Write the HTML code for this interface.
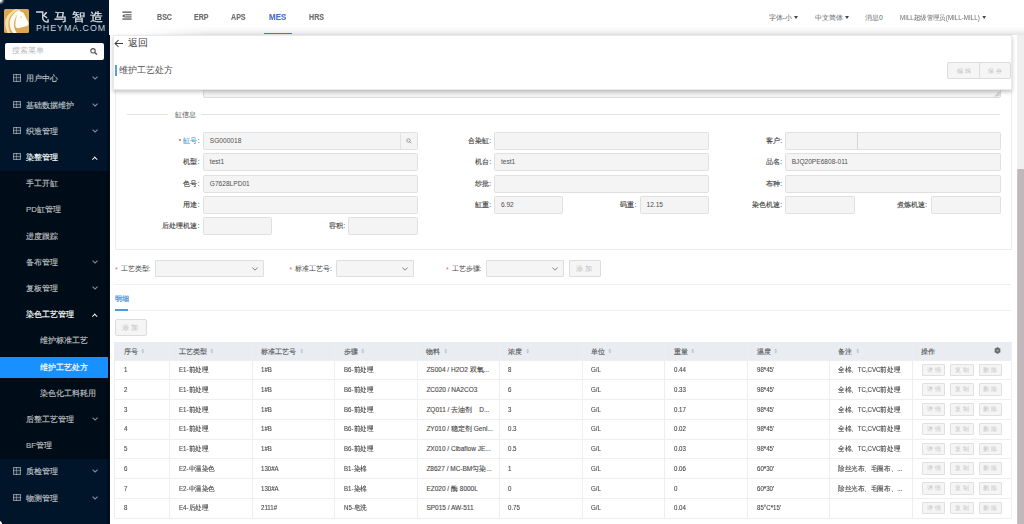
<!DOCTYPE html>
<html><head><meta charset="utf-8">
<style>
*{box-sizing:border-box;margin:0;padding:0}
html,body{width:1024px;height:524px;overflow:hidden;background:#f0f2f5;font-family:"Liberation Sans",sans-serif;color:#595959}
.a{position:absolute}
.t{position:absolute;white-space:nowrap;line-height:1}
/* sidebar */
#side{position:absolute;left:0;top:0;width:109.5px;height:524px;background:#001529}
.mi{position:absolute;left:0;width:109.5px;height:21px;color:rgba(255,255,255,.65);font-size:7.8px}
.mi .lb{position:absolute;left:26px;top:6px;line-height:9px;white-space:nowrap;-webkit-text-stroke:.18px currentColor}
.mi .ic{position:absolute;left:13.3px;top:6px;width:7.4px;height:7.4px;border:1px solid rgba(255,255,255,.45);background:linear-gradient(90deg,transparent 2.2px,rgba(255,255,255,.3) 2.2px,rgba(255,255,255,.3) 3.1px,transparent 3.1px),linear-gradient(transparent 2.2px,rgba(255,255,255,.3) 2.2px,rgba(255,255,255,.3) 3.1px,transparent 3.1px),rgba(255,255,255,.1)}
.mi .ar{position:absolute;left:92.8px;top:7.1px;width:4.2px;height:4.2px;border-right:1.1px solid rgba(255,255,255,.55);border-bottom:1.1px solid rgba(255,255,255,.55);transform:rotate(45deg)}
.mi .ar.up{left:93.3px;top:10.7px;width:3.5px;height:3.5px;border-right-width:1.3px;border-bottom-width:1.3px;transform:rotate(-135deg);border-color:#fff}
/* header */
#hdr{position:absolute;left:109px;top:0;width:915px;height:34.5px;background:#fff}
.nav{position:absolute;top:12.3px;font-size:8.9px;font-weight:bold;color:#6c6c6c;line-height:10px;transform:scaleX(.8);transform-origin:0 0;-webkit-text-stroke:.15px #6c6c6c}
.hr{position:absolute;top:13.8px;font-size:6.8px;color:#666;line-height:8px;white-space:nowrap}
.tri{display:inline-block;width:0;height:0;border-left:2.6px solid transparent;border-right:2.6px solid transparent;border-top:3.4px solid #444;vertical-align:1px;margin-left:.6px}
/* content */
.inp{position:absolute;height:18px;background:#f4f4f4;border:1px solid #e0e0e0;border-radius:1.5px;font-size:6.6px;color:#505050;line-height:16px;padding-left:5.5px;white-space:nowrap}
.lab{position:absolute;font-size:6.6px;color:#444;line-height:8px;text-align:right;white-space:nowrap;-webkit-text-stroke:.15px #444}
.lab i{font-style:normal;margin-left:.6px}
</style></head><body><div id="wrap" style="position:absolute;left:0;top:0;width:1024px;height:524px;overflow:hidden">

<!-- SIDEBAR -->
<div id="side">
<div class="a" style="left:4.3px;top:8.6px;width:24.9px;height:24.6px;background:#dca653;border-radius:1.5px;overflow:hidden">
<svg width="24.9" height="24.6" viewBox="0 0 25 25"><path d="M12.6 0C6 2.5 1 8 1 14C1 19 2.5 22 4 25L6.8 25C5 21.5 4.3 18 4.4 14C4.6 8.5 8.5 3.5 14.5 0.8Z" fill="#f4dfb2"/><path d="M15.5 0.8C9.5 3.5 5.6 9 5.6 14.5C5.6 19 7.4 22.5 9.6 25L13.2 25C11.2 22 9.8 19 10 15C10.3 10 12.5 6 16.8 2.8Z" fill="#fffaf0"/><path d="M14 4.2C16.5 2 19 2.6 20.2 4.8L24.6 13.8C25.2 15.6 24.2 17.4 22.4 17.6L15.2 19.4C12.6 20 10.9 18.2 11.3 15.2C11.8 10.5 12.3 6.2 14 4.2Z" fill="#fffdf9"/><circle cx="17.3" cy="8.2" r="0.9" fill="#d8d2a8"/><path d="M11.3 15.5C11 12 11.5 9 13 6.5" stroke="#e6cf98" stroke-width=".6" fill="none"/></svg>
</div>
<div class="t" style="left:35.6px;top:10.6px;font-size:12px;color:#e4e8ee;line-height:12px;letter-spacing:4.3px;transform:scaleX(1.1);transform-origin:0 0;-webkit-text-stroke:.2px #e4e8ee">飞马智造</div>
<div class="t" style="left:36px;top:24.4px;font-size:8.9px;color:#cdd2da;line-height:8px;letter-spacing:.95px">PHEYMA.COM</div>
<div class="a" style="left:5.3px;top:42.8px;width:98.6px;height:17px;background:#fff;border-radius:2px"></div>
<div class="t" style="left:12.4px;top:47px;font-size:7.9px;color:#bdbdbd;line-height:8px">搜索菜单</div>
<svg class="a" style="left:89.6px;top:48.2px" width="8" height="7" viewBox="0 0 8 7"><circle cx="3" cy="2.8" r="2.2" fill="none" stroke="#555" stroke-width="1.1"/><path d="M4.6 4.4L7 6.6" stroke="#555" stroke-width="1.3"/></svg>
<div class="a" style="left:0;top:170.5px;width:109px;height:288px;background:#000c17"></div>
<div class="a" style="left:106px;top:34px;width:3px;height:490px;background:linear-gradient(90deg,rgba(0,0,0,.1),rgba(0,0,0,.38))"></div>
<div class="a" style="left:0;top:356.8px;width:108.2px;height:21.4px;background:#1890ff"></div>
<div class="mi" style="top:68.3px;color:rgba(255,255,255,.65)"><i class="ic"></i><span class="lb" style="left:26px">用户中心</span><i class="ar"></i></div>
<div class="mi" style="top:94.5px;color:rgba(255,255,255,.65)"><i class="ic"></i><span class="lb" style="left:26px">基础数据维护</span><i class="ar"></i></div>
<div class="mi" style="top:120.7px;color:rgba(255,255,255,.65)"><i class="ic"></i><span class="lb" style="left:26px">织造管理</span><i class="ar"></i></div>
<div class="mi" style="top:146.9px;color:#fff"><i class="ic"></i><span class="lb" style="left:26px">染整管理</span><i class="ar up"></i></div>
<div class="mi" style="top:173.1px;color:rgba(255,255,255,.65)"><span class="lb" style="left:26px">手工开缸</span></div>
<div class="mi" style="top:199.3px;color:rgba(255,255,255,.65)"><span class="lb" style="left:26px">PD缸管理</span></div>
<div class="mi" style="top:225.5px;color:rgba(255,255,255,.65)"><span class="lb" style="left:26px">进度跟踪</span></div>
<div class="mi" style="top:251.7px;color:rgba(255,255,255,.65)"><span class="lb" style="left:26px">备布管理</span><i class="ar"></i></div>
<div class="mi" style="top:277.9px;color:rgba(255,255,255,.65)"><span class="lb" style="left:26px">复板管理</span><i class="ar"></i></div>
<div class="mi" style="top:304.1px;color:#fff"><span class="lb" style="left:26px">染色工艺管理</span><i class="ar up"></i></div>
<div class="mi" style="top:330.3px;color:rgba(255,255,255,.65)"><span class="lb" style="left:40px">维护标准工艺</span></div>
<div class="mi" style="top:356.5px;color:#fff"><span class="lb" style="left:40px">维护工艺处方</span></div>
<div class="mi" style="top:382.7px;color:rgba(255,255,255,.65)"><span class="lb" style="left:40px">染色化工料耗用</span></div>
<div class="mi" style="top:408.9px;color:rgba(255,255,255,.65)"><span class="lb" style="left:26px">后整工艺管理</span><i class="ar"></i></div>
<div class="mi" style="top:435.1px;color:rgba(255,255,255,.65)"><span class="lb" style="left:26px">BF管理</span></div>
<div class="mi" style="top:461.3px;color:rgba(255,255,255,.65)"><i class="ic"></i><span class="lb" style="left:26px">质检管理</span><i class="ar"></i></div>
<div class="mi" style="top:487.5px;color:rgba(255,255,255,.65)"><i class="ic"></i><span class="lb" style="left:26px">物测管理</span><i class="ar"></i></div>
</div>

<!-- HEADER -->
<div id="hdr">
<svg class="a" style="left:12.9px;top:11.4px" width="10" height="10" viewBox="0 0 10 10"><g fill="#4a4a4a"><rect x="0.4" y="0.55" width="9.2" height="1.2"/><rect x="3.2" y="3.3" width="6.4" height="1.05"/><rect x="3.2" y="5.4" width="6.4" height="1.05"/><rect x="0.4" y="7.45" width="9.2" height="1.2"/><path d="M0.2 4.9L2.6 3.1V6.7Z"/></g></svg>
<div class="a" style="left:4px;top:26px;width:911px;height:8.5px;background:linear-gradient(rgba(0,0,0,0),rgba(0,0,0,.035) 50%,rgba(0,0,0,.105));-webkit-mask-image:linear-gradient(90deg,transparent 0,transparent 25px,#000 100px)"></div>
<div class="nav" style="left:47.5px">BSC</div>
<div class="nav" style="left:85px">ERP</div>
<div class="nav" style="left:122px">APS</div>
<div class="nav" style="left:159.6px;color:#4a70c8;-webkit-text-stroke:.15px #4a70c8;transform:scaleX(.9)">MES</div>
<div class="nav" style="left:199.5px">HRS</div>
<div class="a" style="left:154.7px;top:32.6px;width:28.3px;height:1.6px;background:#4a72c9"></div>
<div class="hr" style="left:659.5px">字体-小 <span class="tri"></span></div>
<div class="hr" style="left:706px">中文简体 <span class="tri"></span></div>
<div class="hr" style="left:756px">消息0</div>
<div class="hr" style="left:791px;transform:scaleX(.915);transform-origin:0 0">MILL超级管理员(MILL-MILL) <span class="tri"></span></div>
</div>

<!-- CONTENT -->
<div class="a" style="left:110px;top:34.5px;width:907px;height:490px;background:#fff"></div>
<div class="a" style="left:203.3px;top:60px;width:797.7px;height:37.8px;background:#f3f3f3;border:1px solid #dcdcdc;border-radius:2px"></div>
<svg class="a" style="left:994px;top:91px" width="6" height="6" viewBox="0 0 6 6"><path d="M1 5.5L5.5 1M3.2 5.5L5.5 3.2" stroke="#999" stroke-width=".8"/></svg>
<div class="a" style="left:114.5px;top:60px;width:897px;height:189.5px;border:1px solid #ececec;border-top:none"></div>
<div class="a" style="left:126.5px;top:114px;width:41.2px;height:1px;background:#e3e3e3"></div>
<div class="t" style="left:174.7px;top:111px;font-size:6.7px;color:#555;line-height:8px">缸信息</div>
<div class="a" style="left:200.7px;top:114px;width:799.5px;height:1px;background:#e3e3e3"></div>
<div class="lab" style="right:824.5px;top:136.5px"><span style="color:#e8787a;font-size:6px;margin-right:2px">*</span><span style="color:#5aa6d6;-webkit-text-stroke:.15px #5aa6d6">缸号</span><i>:</i></div>
<div class="inp" style="left:203.3px;top:131.5px;width:214.5px">SG000018</div>
<div class="a" style="left:400px;top:131.5px;width:17.8px;height:18px;border-left:1px solid #e3e3e3"></div>
<svg class="a" style="left:405.5px;top:137.5px" width="6" height="6" viewBox="0 0 6 6"><circle cx="2.5" cy="2.5" r="1.7" fill="none" stroke="#888" stroke-width=".8"/><path d="M3.7 3.7L5.3 5.3" stroke="#888" stroke-width=".8"/></svg>
<div class="lab" style="right:824.5px;top:158px"><span style="color:#444">机型</span><i>:</i></div>
<div class="inp" style="left:203.3px;top:153px;width:214.5px">test1</div>
<div class="lab" style="right:824.5px;top:179.5px"><span style="color:#444">色号</span><i>:</i></div>
<div class="inp" style="left:203.3px;top:174.5px;width:214.5px">G7628LPD01</div>
<div class="lab" style="right:824.5px;top:201px"><span style="color:#444">用途</span><i>:</i></div>
<div class="inp" style="left:203.3px;top:196px;width:214.5px"></div>
<div class="lab" style="right:824.5px;top:222px"><span style="color:#444">后处理机速</span><i>:</i></div>
<div class="inp" style="left:203.3px;top:217px;width:68.3px"></div>
<div class="lab" style="right:679.0px;top:222px"><span style="color:#444">容积</span><i>:</i></div>
<div class="inp" style="left:348px;top:217px;width:69.8px"></div>
<div class="lab" style="right:533.0px;top:136.5px"><span style="color:#444">合染缸</span><i>:</i></div>
<div class="inp" style="left:494.4px;top:131.5px;width:214.4px"></div>
<div class="lab" style="right:533.0px;top:158px"><span style="color:#444">机台</span><i>:</i></div>
<div class="inp" style="left:494.4px;top:153px;width:214.4px">test1</div>
<div class="lab" style="right:533.0px;top:179.5px"><span style="color:#444">纱批</span><i>:</i></div>
<div class="inp" style="left:494.4px;top:174.5px;width:214.4px"></div>
<div class="lab" style="right:533.0px;top:201px"><span style="color:#444">缸重</span><i>:</i></div>
<div class="inp" style="left:494.4px;top:196px;width:68.9px">6.92</div>
<div class="lab" style="right:387.5px;top:201px"><span style="color:#444">码重</span><i>:</i></div>
<div class="inp" style="left:640px;top:196px;width:68.8px">12.15</div>
<div class="lab" style="right:242.0px;top:136.5px"><span style="color:#444">客户</span><i>:</i></div>
<div class="inp" style="left:785.2px;top:131.5px;width:215.4px"></div>
<div class="a" style="left:856.5px;top:132px;width:1px;height:17px;background:#d6d6d6"></div>
<div class="lab" style="right:242.0px;top:158px"><span style="color:#444">品名</span><i>:</i></div>
<div class="inp" style="left:785.2px;top:153px;width:215.4px">BJQ20PE6808-011</div>
<div class="lab" style="right:242.0px;top:179.5px"><span style="color:#444">布种</span><i>:</i></div>
<div class="inp" style="left:785.2px;top:174.5px;width:215.4px"></div>
<div class="lab" style="right:242.0px;top:201px"><span style="color:#444">染色机速</span><i>:</i></div>
<div class="inp" style="left:785.2px;top:196px;width:69.8px"></div>
<div class="lab" style="right:97.0px;top:201px"><span style="color:#444">煮炼机速</span><i>:</i></div>
<div class="inp" style="left:931.3px;top:196px;width:69.3px"></div>
<div class="t" style="left:115px;top:265.2px;font-size:6.6px;color:#444;line-height:8px"><span style="color:#e06a6e;font-size:7px;display:inline-block;width:5.5px;vertical-align:-1px">*</span>工艺类型:</div>
<div class="a" style="left:154.5px;top:260.2px;width:109.8px;height:17.2px;background:#f5f5f5;border:1px solid #dedede;border-radius:1px"></div>
<svg class="a" style="left:252.0px;top:267px" width="6" height="4" viewBox="0 0 6 4"><path d="M0.4 0.5L3 3.2L5.6 0.5" fill="none" stroke="#777" stroke-width=".9"/></svg>
<div class="t" style="left:289.5px;top:265.2px;font-size:6.6px;color:#444;line-height:8px"><span style="color:#e06a6e;font-size:7px;display:inline-block;width:5.5px;vertical-align:-1px">*</span>标准工艺号:</div>
<div class="a" style="left:335.7px;top:260.2px;width:78.1px;height:17.2px;background:#f5f5f5;border:1px solid #dedede;border-radius:1px"></div>
<svg class="a" style="left:401.5px;top:267px" width="6" height="4" viewBox="0 0 6 4"><path d="M0.4 0.5L3 3.2L5.6 0.5" fill="none" stroke="#777" stroke-width=".9"/></svg>
<div class="t" style="left:446px;top:265.2px;font-size:6.6px;color:#444;line-height:8px"><span style="color:#e06a6e;font-size:7px;display:inline-block;width:5.5px;vertical-align:-1px">*</span>工艺步骤:</div>
<div class="a" style="left:485.7px;top:260.2px;width:78.1px;height:17.2px;background:#f5f5f5;border:1px solid #dedede;border-radius:1px"></div>
<svg class="a" style="left:551.5px;top:267px" width="6" height="4" viewBox="0 0 6 4"><path d="M0.4 0.5L3 3.2L5.6 0.5" fill="none" stroke="#777" stroke-width=".9"/></svg>
<div class="a" style="left:568.8px;top:260.2px;width:32px;height:17.2px;background:#f5f5f5;border:1px solid #dcdcdc;border-radius:1px;font-size:6.6px;color:#bbb;text-align:center;line-height:15px;letter-spacing:2px">添加</div>
<div class="a" style="left:114px;top:284px;width:897px;height:1px;background:#f0f0f0"></div>
<div class="t" style="left:115px;top:295px;font-size:6.7px;color:#3a8ad2;line-height:8px;-webkit-text-stroke:.2px #3a8ad2">明细</div>
<div class="a" style="left:114px;top:310px;width:897px;height:1px;background:#f0f0f0"></div>
<div class="a" style="left:115px;top:309.3px;width:13.2px;height:1.6px;background:#4f9ad9"></div>
<div class="a" style="left:115px;top:319.2px;width:31.6px;height:17.2px;background:#f5f5f5;border:1px solid #dcdcdc;border-radius:2px;font-size:6.6px;color:#bbb;text-align:center;line-height:15px;letter-spacing:2px">添加</div>

<!-- TABLE -->
<div class="a" style="left:114.8px;top:342.2px;width:896.8px;height:17.9px;background:#e9ecf1"></div>
<div class="a" style="left:114.8px;top:359.6px;width:896.8px;height:1px;background:#edeef1"></div>
<div class="a" style="left:114.8px;top:379.3px;width:896.8px;height:1px;background:#edeef1"></div>
<div class="a" style="left:114.8px;top:399.1px;width:896.8px;height:1px;background:#edeef1"></div>
<div class="a" style="left:114.8px;top:418.8px;width:896.8px;height:1px;background:#edeef1"></div>
<div class="a" style="left:114.8px;top:438.6px;width:896.8px;height:1px;background:#edeef1"></div>
<div class="a" style="left:114.8px;top:458.3px;width:896.8px;height:1px;background:#edeef1"></div>
<div class="a" style="left:114.8px;top:478.1px;width:896.8px;height:1px;background:#edeef1"></div>
<div class="a" style="left:114.8px;top:497.8px;width:896.8px;height:1px;background:#edeef1"></div>
<div class="a" style="left:114.8px;top:517.6px;width:896.8px;height:1px;background:#edeef1"></div>
<div class="a" style="left:114.3px;top:342.2px;width:1px;height:175.9px;background:#edeef1"></div>
<div class="a" style="left:169.3px;top:342.2px;width:1px;height:175.9px;background:#edeef1"></div>
<div class="a" style="left:251.9px;top:342.2px;width:1px;height:175.9px;background:#edeef1"></div>
<div class="a" style="left:334.4px;top:342.2px;width:1px;height:175.9px;background:#edeef1"></div>
<div class="a" style="left:416.9px;top:342.2px;width:1px;height:175.9px;background:#edeef1"></div>
<div class="a" style="left:498.9px;top:342.2px;width:1px;height:175.9px;background:#edeef1"></div>
<div class="a" style="left:581.5px;top:342.2px;width:1px;height:175.9px;background:#edeef1"></div>
<div class="a" style="left:664.3px;top:342.2px;width:1px;height:175.9px;background:#edeef1"></div>
<div class="a" style="left:747.0px;top:342.2px;width:1px;height:175.9px;background:#edeef1"></div>
<div class="a" style="left:828.9px;top:342.2px;width:1px;height:175.9px;background:#edeef1"></div>
<div class="a" style="left:911.8px;top:342.2px;width:1px;height:175.9px;background:#edeef1"></div>
<div class="a" style="left:1011.1px;top:342.2px;width:1px;height:175.9px;background:#edeef1"></div>
<div class="t" style="left:123.8px;top:347.7px;font-size:6.5px;color:#555;line-height:7px;-webkit-text-stroke:.12px #555">序号<svg style="margin-left:3.2px;vertical-align:-.3px" width="3.6" height="6" viewBox="0 0 3.6 6"><path d="M0.3 2.5L1.8 0.7L3.3 2.5ZM0.3 3.5L1.8 5.3L3.3 3.5Z" fill="#b4b8c0"/></svg></div>
<div class="t" style="left:178.8px;top:347.7px;font-size:6.5px;color:#555;line-height:7px;-webkit-text-stroke:.12px #555">工艺类型<svg style="margin-left:3.2px;vertical-align:-.3px" width="3.6" height="6" viewBox="0 0 3.6 6"><path d="M0.3 2.5L1.8 0.7L3.3 2.5ZM0.3 3.5L1.8 5.3L3.3 3.5Z" fill="#b4b8c0"/></svg></div>
<div class="t" style="left:261.4px;top:347.7px;font-size:6.5px;color:#555;line-height:7px;-webkit-text-stroke:.12px #555">标准工艺号<svg style="margin-left:3.2px;vertical-align:-.3px" width="3.6" height="6" viewBox="0 0 3.6 6"><path d="M0.3 2.5L1.8 0.7L3.3 2.5ZM0.3 3.5L1.8 5.3L3.3 3.5Z" fill="#b4b8c0"/></svg></div>
<div class="t" style="left:343.9px;top:347.7px;font-size:6.5px;color:#555;line-height:7px;-webkit-text-stroke:.12px #555">步骤<svg style="margin-left:3.2px;vertical-align:-.3px" width="3.6" height="6" viewBox="0 0 3.6 6"><path d="M0.3 2.5L1.8 0.7L3.3 2.5ZM0.3 3.5L1.8 5.3L3.3 3.5Z" fill="#b4b8c0"/></svg></div>
<div class="t" style="left:426.4px;top:347.7px;font-size:6.5px;color:#555;line-height:7px;-webkit-text-stroke:.12px #555">物料<svg style="margin-left:3.2px;vertical-align:-.3px" width="3.6" height="6" viewBox="0 0 3.6 6"><path d="M0.3 2.5L1.8 0.7L3.3 2.5ZM0.3 3.5L1.8 5.3L3.3 3.5Z" fill="#b4b8c0"/></svg></div>
<div class="t" style="left:508.4px;top:347.7px;font-size:6.5px;color:#555;line-height:7px;-webkit-text-stroke:.12px #555">浓度<svg style="margin-left:3.2px;vertical-align:-.3px" width="3.6" height="6" viewBox="0 0 3.6 6"><path d="M0.3 2.5L1.8 0.7L3.3 2.5ZM0.3 3.5L1.8 5.3L3.3 3.5Z" fill="#b4b8c0"/></svg></div>
<div class="t" style="left:591.0px;top:347.7px;font-size:6.5px;color:#555;line-height:7px;-webkit-text-stroke:.12px #555">单位<svg style="margin-left:3.2px;vertical-align:-.3px" width="3.6" height="6" viewBox="0 0 3.6 6"><path d="M0.3 2.5L1.8 0.7L3.3 2.5ZM0.3 3.5L1.8 5.3L3.3 3.5Z" fill="#b4b8c0"/></svg></div>
<div class="t" style="left:673.8px;top:347.7px;font-size:6.5px;color:#555;line-height:7px;-webkit-text-stroke:.12px #555">重量<svg style="margin-left:3.2px;vertical-align:-.3px" width="3.6" height="6" viewBox="0 0 3.6 6"><path d="M0.3 2.5L1.8 0.7L3.3 2.5ZM0.3 3.5L1.8 5.3L3.3 3.5Z" fill="#b4b8c0"/></svg></div>
<div class="t" style="left:756.5px;top:347.7px;font-size:6.5px;color:#555;line-height:7px;-webkit-text-stroke:.12px #555">温度<svg style="margin-left:3.2px;vertical-align:-.3px" width="3.6" height="6" viewBox="0 0 3.6 6"><path d="M0.3 2.5L1.8 0.7L3.3 2.5ZM0.3 3.5L1.8 5.3L3.3 3.5Z" fill="#b4b8c0"/></svg></div>
<div class="t" style="left:838.4px;top:347.7px;font-size:6.5px;color:#555;line-height:7px;-webkit-text-stroke:.12px #555">备注<svg style="margin-left:3.2px;vertical-align:-.3px" width="3.6" height="6" viewBox="0 0 3.6 6"><path d="M0.3 2.5L1.8 0.7L3.3 2.5ZM0.3 3.5L1.8 5.3L3.3 3.5Z" fill="#b4b8c0"/></svg></div>
<div class="t" style="left:921.3px;top:347.7px;font-size:6.5px;color:#555;line-height:7px;-webkit-text-stroke:.12px #555">操作</div>
<svg class="a" style="left:994.1px;top:346.9px" width="7" height="7" viewBox="0 0 7 7"><path fill="#6a6a6a" d="M3.50,0.10 L4.90,1.08 L6.44,1.80 L6.30,3.50 L6.44,5.20 L4.90,5.92 L3.50,6.90 L2.10,5.92 L0.56,5.20 L0.70,3.50 L0.56,1.80 L2.10,1.08Z"/><circle cx="3.5" cy="3.5" r="1.1" fill="#a9abb0"/></svg>
<div class="t" style="left:123.8px;top:366.0px;font-size:6.5px;color:#4a4a4a;line-height:7px;transform:scaleX(.94);transform-origin:0 0;-webkit-text-stroke:.12px #4a4a4a">1</div>
<div class="t" style="left:178.8px;top:366.0px;font-size:6.5px;color:#4a4a4a;line-height:7px;transform:scaleX(.94);transform-origin:0 0;-webkit-text-stroke:.12px #4a4a4a">E1-前处理</div>
<div class="t" style="left:261.4px;top:366.0px;font-size:6.5px;color:#4a4a4a;line-height:7px;transform:scaleX(.94);transform-origin:0 0;-webkit-text-stroke:.12px #4a4a4a">1#B</div>
<div class="t" style="left:343.9px;top:366.0px;font-size:6.5px;color:#4a4a4a;line-height:7px;transform:scaleX(.94);transform-origin:0 0;-webkit-text-stroke:.12px #4a4a4a">B6-前处理</div>
<div class="t" style="left:426.4px;top:366.0px;font-size:6.5px;color:#4a4a4a;line-height:7px;-webkit-text-stroke:.12px #4a4a4a">ZS004 / H2O2 双氧...</div>
<div class="t" style="left:508.4px;top:366.0px;font-size:6.5px;color:#4a4a4a;line-height:7px;transform:scaleX(.94);transform-origin:0 0;-webkit-text-stroke:.12px #4a4a4a">8</div>
<div class="t" style="left:591.0px;top:366.0px;font-size:6.5px;color:#4a4a4a;line-height:7px;transform:scaleX(.94);transform-origin:0 0;-webkit-text-stroke:.12px #4a4a4a">G/L</div>
<div class="t" style="left:673.8px;top:366.0px;font-size:6.5px;color:#4a4a4a;line-height:7px;transform:scaleX(.94);transform-origin:0 0;-webkit-text-stroke:.12px #4a4a4a">0.44</div>
<div class="t" style="left:756.5px;top:366.0px;font-size:6.5px;color:#4a4a4a;line-height:7px;transform:scaleX(.94);transform-origin:0 0;-webkit-text-stroke:.12px #4a4a4a">98*45'</div>
<div class="t" style="left:838.4px;top:366.0px;font-size:6.5px;color:#4a4a4a;line-height:7px;transform:scaleX(.94);transform-origin:0 0;-webkit-text-stroke:.12px #4a4a4a">全棉、TC,CVC前处理</div>
<div class="a" style="left:921.7px;top:363.7px;width:23.8px;height:12.6px;background:#f5f5f5;border:1px solid #e0e0e0;border-radius:1px;font-size:6px;color:#c4c4c4;text-align:center;line-height:11px;letter-spacing:2px;padding-left:2px">详情</div>
<div class="a" style="left:950.4px;top:363.7px;width:23.8px;height:12.6px;background:#f5f5f5;border:1px solid #e0e0e0;border-radius:1px;font-size:6px;color:#c4c4c4;text-align:center;line-height:11px;letter-spacing:2px;padding-left:2px">复制</div>
<div class="a" style="left:978.5px;top:363.7px;width:23.8px;height:12.6px;background:#f5f5f5;border:1px solid #e0e0e0;border-radius:1px;font-size:6px;color:#c4c4c4;text-align:center;line-height:11px;letter-spacing:2px;padding-left:2px">删除</div>
<div class="t" style="left:123.8px;top:385.7px;font-size:6.5px;color:#4a4a4a;line-height:7px;transform:scaleX(.94);transform-origin:0 0;-webkit-text-stroke:.12px #4a4a4a">2</div>
<div class="t" style="left:178.8px;top:385.7px;font-size:6.5px;color:#4a4a4a;line-height:7px;transform:scaleX(.94);transform-origin:0 0;-webkit-text-stroke:.12px #4a4a4a">E1-前处理</div>
<div class="t" style="left:261.4px;top:385.7px;font-size:6.5px;color:#4a4a4a;line-height:7px;transform:scaleX(.94);transform-origin:0 0;-webkit-text-stroke:.12px #4a4a4a">1#B</div>
<div class="t" style="left:343.9px;top:385.7px;font-size:6.5px;color:#4a4a4a;line-height:7px;transform:scaleX(.94);transform-origin:0 0;-webkit-text-stroke:.12px #4a4a4a">B6-前处理</div>
<div class="t" style="left:426.4px;top:385.7px;font-size:6.5px;color:#4a4a4a;line-height:7px;-webkit-text-stroke:.12px #4a4a4a">ZC020 / NA2CO3</div>
<div class="t" style="left:508.4px;top:385.7px;font-size:6.5px;color:#4a4a4a;line-height:7px;transform:scaleX(.94);transform-origin:0 0;-webkit-text-stroke:.12px #4a4a4a">6</div>
<div class="t" style="left:591.0px;top:385.7px;font-size:6.5px;color:#4a4a4a;line-height:7px;transform:scaleX(.94);transform-origin:0 0;-webkit-text-stroke:.12px #4a4a4a">G/L</div>
<div class="t" style="left:673.8px;top:385.7px;font-size:6.5px;color:#4a4a4a;line-height:7px;transform:scaleX(.94);transform-origin:0 0;-webkit-text-stroke:.12px #4a4a4a">0.33</div>
<div class="t" style="left:756.5px;top:385.7px;font-size:6.5px;color:#4a4a4a;line-height:7px;transform:scaleX(.94);transform-origin:0 0;-webkit-text-stroke:.12px #4a4a4a">98*45'</div>
<div class="t" style="left:838.4px;top:385.7px;font-size:6.5px;color:#4a4a4a;line-height:7px;transform:scaleX(.94);transform-origin:0 0;-webkit-text-stroke:.12px #4a4a4a">全棉、TC,CVC前处理</div>
<div class="a" style="left:921.7px;top:383.4px;width:23.8px;height:12.6px;background:#f5f5f5;border:1px solid #e0e0e0;border-radius:1px;font-size:6px;color:#c4c4c4;text-align:center;line-height:11px;letter-spacing:2px;padding-left:2px">详情</div>
<div class="a" style="left:950.4px;top:383.4px;width:23.8px;height:12.6px;background:#f5f5f5;border:1px solid #e0e0e0;border-radius:1px;font-size:6px;color:#c4c4c4;text-align:center;line-height:11px;letter-spacing:2px;padding-left:2px">复制</div>
<div class="a" style="left:978.5px;top:383.4px;width:23.8px;height:12.6px;background:#f5f5f5;border:1px solid #e0e0e0;border-radius:1px;font-size:6px;color:#c4c4c4;text-align:center;line-height:11px;letter-spacing:2px;padding-left:2px">删除</div>
<div class="t" style="left:123.8px;top:405.5px;font-size:6.5px;color:#4a4a4a;line-height:7px;transform:scaleX(.94);transform-origin:0 0;-webkit-text-stroke:.12px #4a4a4a">3</div>
<div class="t" style="left:178.8px;top:405.5px;font-size:6.5px;color:#4a4a4a;line-height:7px;transform:scaleX(.94);transform-origin:0 0;-webkit-text-stroke:.12px #4a4a4a">E1-前处理</div>
<div class="t" style="left:261.4px;top:405.5px;font-size:6.5px;color:#4a4a4a;line-height:7px;transform:scaleX(.94);transform-origin:0 0;-webkit-text-stroke:.12px #4a4a4a">1#B</div>
<div class="t" style="left:343.9px;top:405.5px;font-size:6.5px;color:#4a4a4a;line-height:7px;transform:scaleX(.94);transform-origin:0 0;-webkit-text-stroke:.12px #4a4a4a">B6-前处理</div>
<div class="t" style="left:426.4px;top:405.5px;font-size:6.5px;color:#4a4a4a;line-height:7px;-webkit-text-stroke:.12px #4a4a4a">ZQ011 / 去油剂　D...</div>
<div class="t" style="left:508.4px;top:405.5px;font-size:6.5px;color:#4a4a4a;line-height:7px;transform:scaleX(.94);transform-origin:0 0;-webkit-text-stroke:.12px #4a4a4a">3</div>
<div class="t" style="left:591.0px;top:405.5px;font-size:6.5px;color:#4a4a4a;line-height:7px;transform:scaleX(.94);transform-origin:0 0;-webkit-text-stroke:.12px #4a4a4a">G/L</div>
<div class="t" style="left:673.8px;top:405.5px;font-size:6.5px;color:#4a4a4a;line-height:7px;transform:scaleX(.94);transform-origin:0 0;-webkit-text-stroke:.12px #4a4a4a">0.17</div>
<div class="t" style="left:756.5px;top:405.5px;font-size:6.5px;color:#4a4a4a;line-height:7px;transform:scaleX(.94);transform-origin:0 0;-webkit-text-stroke:.12px #4a4a4a">98*45'</div>
<div class="t" style="left:838.4px;top:405.5px;font-size:6.5px;color:#4a4a4a;line-height:7px;transform:scaleX(.94);transform-origin:0 0;-webkit-text-stroke:.12px #4a4a4a">全棉、TC,CVC前处理</div>
<div class="a" style="left:921.7px;top:403.2px;width:23.8px;height:12.6px;background:#f5f5f5;border:1px solid #e0e0e0;border-radius:1px;font-size:6px;color:#c4c4c4;text-align:center;line-height:11px;letter-spacing:2px;padding-left:2px">详情</div>
<div class="a" style="left:950.4px;top:403.2px;width:23.8px;height:12.6px;background:#f5f5f5;border:1px solid #e0e0e0;border-radius:1px;font-size:6px;color:#c4c4c4;text-align:center;line-height:11px;letter-spacing:2px;padding-left:2px">复制</div>
<div class="a" style="left:978.5px;top:403.2px;width:23.8px;height:12.6px;background:#f5f5f5;border:1px solid #e0e0e0;border-radius:1px;font-size:6px;color:#c4c4c4;text-align:center;line-height:11px;letter-spacing:2px;padding-left:2px">删除</div>
<div class="t" style="left:123.8px;top:425.2px;font-size:6.5px;color:#4a4a4a;line-height:7px;transform:scaleX(.94);transform-origin:0 0;-webkit-text-stroke:.12px #4a4a4a">4</div>
<div class="t" style="left:178.8px;top:425.2px;font-size:6.5px;color:#4a4a4a;line-height:7px;transform:scaleX(.94);transform-origin:0 0;-webkit-text-stroke:.12px #4a4a4a">E1-前处理</div>
<div class="t" style="left:261.4px;top:425.2px;font-size:6.5px;color:#4a4a4a;line-height:7px;transform:scaleX(.94);transform-origin:0 0;-webkit-text-stroke:.12px #4a4a4a">1#B</div>
<div class="t" style="left:343.9px;top:425.2px;font-size:6.5px;color:#4a4a4a;line-height:7px;transform:scaleX(.94);transform-origin:0 0;-webkit-text-stroke:.12px #4a4a4a">B6-前处理</div>
<div class="t" style="left:426.4px;top:425.2px;font-size:6.5px;color:#4a4a4a;line-height:7px;-webkit-text-stroke:.12px #4a4a4a">ZY010 / 稳定剂 Genl...</div>
<div class="t" style="left:508.4px;top:425.2px;font-size:6.5px;color:#4a4a4a;line-height:7px;transform:scaleX(.94);transform-origin:0 0;-webkit-text-stroke:.12px #4a4a4a">0.3</div>
<div class="t" style="left:591.0px;top:425.2px;font-size:6.5px;color:#4a4a4a;line-height:7px;transform:scaleX(.94);transform-origin:0 0;-webkit-text-stroke:.12px #4a4a4a">G/L</div>
<div class="t" style="left:673.8px;top:425.2px;font-size:6.5px;color:#4a4a4a;line-height:7px;transform:scaleX(.94);transform-origin:0 0;-webkit-text-stroke:.12px #4a4a4a">0.02</div>
<div class="t" style="left:756.5px;top:425.2px;font-size:6.5px;color:#4a4a4a;line-height:7px;transform:scaleX(.94);transform-origin:0 0;-webkit-text-stroke:.12px #4a4a4a">98*45'</div>
<div class="t" style="left:838.4px;top:425.2px;font-size:6.5px;color:#4a4a4a;line-height:7px;transform:scaleX(.94);transform-origin:0 0;-webkit-text-stroke:.12px #4a4a4a">全棉、TC,CVC前处理</div>
<div class="a" style="left:921.7px;top:422.9px;width:23.8px;height:12.6px;background:#f5f5f5;border:1px solid #e0e0e0;border-radius:1px;font-size:6px;color:#c4c4c4;text-align:center;line-height:11px;letter-spacing:2px;padding-left:2px">详情</div>
<div class="a" style="left:950.4px;top:422.9px;width:23.8px;height:12.6px;background:#f5f5f5;border:1px solid #e0e0e0;border-radius:1px;font-size:6px;color:#c4c4c4;text-align:center;line-height:11px;letter-spacing:2px;padding-left:2px">复制</div>
<div class="a" style="left:978.5px;top:422.9px;width:23.8px;height:12.6px;background:#f5f5f5;border:1px solid #e0e0e0;border-radius:1px;font-size:6px;color:#c4c4c4;text-align:center;line-height:11px;letter-spacing:2px;padding-left:2px">删除</div>
<div class="t" style="left:123.8px;top:445.0px;font-size:6.5px;color:#4a4a4a;line-height:7px;transform:scaleX(.94);transform-origin:0 0;-webkit-text-stroke:.12px #4a4a4a">5</div>
<div class="t" style="left:178.8px;top:445.0px;font-size:6.5px;color:#4a4a4a;line-height:7px;transform:scaleX(.94);transform-origin:0 0;-webkit-text-stroke:.12px #4a4a4a">E1-前处理</div>
<div class="t" style="left:261.4px;top:445.0px;font-size:6.5px;color:#4a4a4a;line-height:7px;transform:scaleX(.94);transform-origin:0 0;-webkit-text-stroke:.12px #4a4a4a">1#B</div>
<div class="t" style="left:343.9px;top:445.0px;font-size:6.5px;color:#4a4a4a;line-height:7px;transform:scaleX(.94);transform-origin:0 0;-webkit-text-stroke:.12px #4a4a4a">B6-前处理</div>
<div class="t" style="left:426.4px;top:445.0px;font-size:6.5px;color:#4a4a4a;line-height:7px;-webkit-text-stroke:.12px #4a4a4a">ZX010 / Cibaflow JE...</div>
<div class="t" style="left:508.4px;top:445.0px;font-size:6.5px;color:#4a4a4a;line-height:7px;transform:scaleX(.94);transform-origin:0 0;-webkit-text-stroke:.12px #4a4a4a">0.5</div>
<div class="t" style="left:591.0px;top:445.0px;font-size:6.5px;color:#4a4a4a;line-height:7px;transform:scaleX(.94);transform-origin:0 0;-webkit-text-stroke:.12px #4a4a4a">G/L</div>
<div class="t" style="left:673.8px;top:445.0px;font-size:6.5px;color:#4a4a4a;line-height:7px;transform:scaleX(.94);transform-origin:0 0;-webkit-text-stroke:.12px #4a4a4a">0.03</div>
<div class="t" style="left:756.5px;top:445.0px;font-size:6.5px;color:#4a4a4a;line-height:7px;transform:scaleX(.94);transform-origin:0 0;-webkit-text-stroke:.12px #4a4a4a">98*45'</div>
<div class="t" style="left:838.4px;top:445.0px;font-size:6.5px;color:#4a4a4a;line-height:7px;transform:scaleX(.94);transform-origin:0 0;-webkit-text-stroke:.12px #4a4a4a">全棉、TC,CVC前处理</div>
<div class="a" style="left:921.7px;top:442.7px;width:23.8px;height:12.6px;background:#f5f5f5;border:1px solid #e0e0e0;border-radius:1px;font-size:6px;color:#c4c4c4;text-align:center;line-height:11px;letter-spacing:2px;padding-left:2px">详情</div>
<div class="a" style="left:950.4px;top:442.7px;width:23.8px;height:12.6px;background:#f5f5f5;border:1px solid #e0e0e0;border-radius:1px;font-size:6px;color:#c4c4c4;text-align:center;line-height:11px;letter-spacing:2px;padding-left:2px">复制</div>
<div class="a" style="left:978.5px;top:442.7px;width:23.8px;height:12.6px;background:#f5f5f5;border:1px solid #e0e0e0;border-radius:1px;font-size:6px;color:#c4c4c4;text-align:center;line-height:11px;letter-spacing:2px;padding-left:2px">删除</div>
<div class="t" style="left:123.8px;top:464.7px;font-size:6.5px;color:#4a4a4a;line-height:7px;transform:scaleX(.94);transform-origin:0 0;-webkit-text-stroke:.12px #4a4a4a">6</div>
<div class="t" style="left:178.8px;top:464.7px;font-size:6.5px;color:#4a4a4a;line-height:7px;transform:scaleX(.94);transform-origin:0 0;-webkit-text-stroke:.12px #4a4a4a">E2-中温染色</div>
<div class="t" style="left:261.4px;top:464.7px;font-size:6.5px;color:#4a4a4a;line-height:7px;transform:scaleX(.94);transform-origin:0 0;-webkit-text-stroke:.12px #4a4a4a">130#A</div>
<div class="t" style="left:343.9px;top:464.7px;font-size:6.5px;color:#4a4a4a;line-height:7px;transform:scaleX(.94);transform-origin:0 0;-webkit-text-stroke:.12px #4a4a4a">B1-染棉</div>
<div class="t" style="left:426.4px;top:464.7px;font-size:6.5px;color:#4a4a4a;line-height:7px;-webkit-text-stroke:.12px #4a4a4a">Z8627 / MC-BM匀染...</div>
<div class="t" style="left:508.4px;top:464.7px;font-size:6.5px;color:#4a4a4a;line-height:7px;transform:scaleX(.94);transform-origin:0 0;-webkit-text-stroke:.12px #4a4a4a">1</div>
<div class="t" style="left:591.0px;top:464.7px;font-size:6.5px;color:#4a4a4a;line-height:7px;transform:scaleX(.94);transform-origin:0 0;-webkit-text-stroke:.12px #4a4a4a">G/L</div>
<div class="t" style="left:673.8px;top:464.7px;font-size:6.5px;color:#4a4a4a;line-height:7px;transform:scaleX(.94);transform-origin:0 0;-webkit-text-stroke:.12px #4a4a4a">0.06</div>
<div class="t" style="left:756.5px;top:464.7px;font-size:6.5px;color:#4a4a4a;line-height:7px;transform:scaleX(.94);transform-origin:0 0;-webkit-text-stroke:.12px #4a4a4a">60*30'</div>
<div class="t" style="left:838.4px;top:464.7px;font-size:6.5px;color:#4a4a4a;line-height:7px;transform:scaleX(.94);transform-origin:0 0;-webkit-text-stroke:.12px #4a4a4a">除丝光布、毛圈布、...</div>
<div class="a" style="left:921.7px;top:462.4px;width:23.8px;height:12.6px;background:#f5f5f5;border:1px solid #e0e0e0;border-radius:1px;font-size:6px;color:#c4c4c4;text-align:center;line-height:11px;letter-spacing:2px;padding-left:2px">详情</div>
<div class="a" style="left:950.4px;top:462.4px;width:23.8px;height:12.6px;background:#f5f5f5;border:1px solid #e0e0e0;border-radius:1px;font-size:6px;color:#c4c4c4;text-align:center;line-height:11px;letter-spacing:2px;padding-left:2px">复制</div>
<div class="a" style="left:978.5px;top:462.4px;width:23.8px;height:12.6px;background:#f5f5f5;border:1px solid #e0e0e0;border-radius:1px;font-size:6px;color:#c4c4c4;text-align:center;line-height:11px;letter-spacing:2px;padding-left:2px">删除</div>
<div class="t" style="left:123.8px;top:484.5px;font-size:6.5px;color:#4a4a4a;line-height:7px;transform:scaleX(.94);transform-origin:0 0;-webkit-text-stroke:.12px #4a4a4a">7</div>
<div class="t" style="left:178.8px;top:484.5px;font-size:6.5px;color:#4a4a4a;line-height:7px;transform:scaleX(.94);transform-origin:0 0;-webkit-text-stroke:.12px #4a4a4a">E2-中温染色</div>
<div class="t" style="left:261.4px;top:484.5px;font-size:6.5px;color:#4a4a4a;line-height:7px;transform:scaleX(.94);transform-origin:0 0;-webkit-text-stroke:.12px #4a4a4a">130#A</div>
<div class="t" style="left:343.9px;top:484.5px;font-size:6.5px;color:#4a4a4a;line-height:7px;transform:scaleX(.94);transform-origin:0 0;-webkit-text-stroke:.12px #4a4a4a">B1-染棉</div>
<div class="t" style="left:426.4px;top:484.5px;font-size:6.5px;color:#4a4a4a;line-height:7px;-webkit-text-stroke:.12px #4a4a4a">EZ020 / 酶 8000L</div>
<div class="t" style="left:508.4px;top:484.5px;font-size:6.5px;color:#4a4a4a;line-height:7px;transform:scaleX(.94);transform-origin:0 0;-webkit-text-stroke:.12px #4a4a4a">0</div>
<div class="t" style="left:591.0px;top:484.5px;font-size:6.5px;color:#4a4a4a;line-height:7px;transform:scaleX(.94);transform-origin:0 0;-webkit-text-stroke:.12px #4a4a4a">G/L</div>
<div class="t" style="left:673.8px;top:484.5px;font-size:6.5px;color:#4a4a4a;line-height:7px;transform:scaleX(.94);transform-origin:0 0;-webkit-text-stroke:.12px #4a4a4a">0</div>
<div class="t" style="left:756.5px;top:484.5px;font-size:6.5px;color:#4a4a4a;line-height:7px;transform:scaleX(.94);transform-origin:0 0;-webkit-text-stroke:.12px #4a4a4a">60*30'</div>
<div class="t" style="left:838.4px;top:484.5px;font-size:6.5px;color:#4a4a4a;line-height:7px;transform:scaleX(.94);transform-origin:0 0;-webkit-text-stroke:.12px #4a4a4a">除丝光布、毛圈布、...</div>
<div class="a" style="left:921.7px;top:482.2px;width:23.8px;height:12.6px;background:#f5f5f5;border:1px solid #e0e0e0;border-radius:1px;font-size:6px;color:#c4c4c4;text-align:center;line-height:11px;letter-spacing:2px;padding-left:2px">详情</div>
<div class="a" style="left:950.4px;top:482.2px;width:23.8px;height:12.6px;background:#f5f5f5;border:1px solid #e0e0e0;border-radius:1px;font-size:6px;color:#c4c4c4;text-align:center;line-height:11px;letter-spacing:2px;padding-left:2px">复制</div>
<div class="a" style="left:978.5px;top:482.2px;width:23.8px;height:12.6px;background:#f5f5f5;border:1px solid #e0e0e0;border-radius:1px;font-size:6px;color:#c4c4c4;text-align:center;line-height:11px;letter-spacing:2px;padding-left:2px">删除</div>
<div class="t" style="left:123.8px;top:504.2px;font-size:6.5px;color:#4a4a4a;line-height:7px;transform:scaleX(.94);transform-origin:0 0;-webkit-text-stroke:.12px #4a4a4a">8</div>
<div class="t" style="left:178.8px;top:504.2px;font-size:6.5px;color:#4a4a4a;line-height:7px;transform:scaleX(.94);transform-origin:0 0;-webkit-text-stroke:.12px #4a4a4a">E4-后处理</div>
<div class="t" style="left:261.4px;top:504.2px;font-size:6.5px;color:#4a4a4a;line-height:7px;transform:scaleX(.94);transform-origin:0 0;-webkit-text-stroke:.12px #4a4a4a">2111#</div>
<div class="t" style="left:343.9px;top:504.2px;font-size:6.5px;color:#4a4a4a;line-height:7px;transform:scaleX(.94);transform-origin:0 0;-webkit-text-stroke:.12px #4a4a4a">N5-皂洗</div>
<div class="t" style="left:426.4px;top:504.2px;font-size:6.5px;color:#4a4a4a;line-height:7px;-webkit-text-stroke:.12px #4a4a4a">SP015 / AW-511</div>
<div class="t" style="left:508.4px;top:504.2px;font-size:6.5px;color:#4a4a4a;line-height:7px;transform:scaleX(.94);transform-origin:0 0;-webkit-text-stroke:.12px #4a4a4a">0.75</div>
<div class="t" style="left:591.0px;top:504.2px;font-size:6.5px;color:#4a4a4a;line-height:7px;transform:scaleX(.94);transform-origin:0 0;-webkit-text-stroke:.12px #4a4a4a">G/L</div>
<div class="t" style="left:673.8px;top:504.2px;font-size:6.5px;color:#4a4a4a;line-height:7px;transform:scaleX(.94);transform-origin:0 0;-webkit-text-stroke:.12px #4a4a4a">0.04</div>
<div class="t" style="left:756.5px;top:504.2px;font-size:6.5px;color:#4a4a4a;line-height:7px;transform:scaleX(.94);transform-origin:0 0;-webkit-text-stroke:.12px #4a4a4a">85°C*15'</div>
<div class="t" style="left:838.4px;top:504.2px;font-size:6.5px;color:#4a4a4a;line-height:7px;transform:scaleX(.94);transform-origin:0 0;-webkit-text-stroke:.12px #4a4a4a"></div>
<div class="a" style="left:921.7px;top:501.9px;width:23.8px;height:12.6px;background:#f5f5f5;border:1px solid #e0e0e0;border-radius:1px;font-size:6px;color:#c4c4c4;text-align:center;line-height:11px;letter-spacing:2px;padding-left:2px">详情</div>
<div class="a" style="left:950.4px;top:501.9px;width:23.8px;height:12.6px;background:#f5f5f5;border:1px solid #e0e0e0;border-radius:1px;font-size:6px;color:#c4c4c4;text-align:center;line-height:11px;letter-spacing:2px;padding-left:2px">复制</div>
<div class="a" style="left:978.5px;top:501.9px;width:23.8px;height:12.6px;background:#f5f5f5;border:1px solid #e0e0e0;border-radius:1px;font-size:6px;color:#c4c4c4;text-align:center;line-height:11px;letter-spacing:2px;padding-left:2px">删除</div>
<!-- /TABLE -->
<!-- PANEL -->
<div class="a" id="panel" style="left:113px;top:34.5px;width:899px;height:55px;background:#fff;border:1px solid #eaeaea;box-shadow:0 2px 4px rgba(0,0,0,.24)">
<svg class="a" style="left:0.4px;top:3px" width="9.5" height="9" viewBox="0 0 9.5 9"><path d="M9 4.5H1.3M4.6 1L1.1 4.5L4.6 8" fill="none" stroke="#3a3a3a" stroke-width="1.05"/></svg>
<div class="t" style="left:13.5px;top:2.8px;font-size:9.8px;color:#3f3f3f;line-height:10px">返回</div>
<div class="a" style="left:0.6px;top:29.3px;width:2.2px;height:11.7px;background:#5a9fd8"></div>
<div class="t" style="left:5px;top:30.8px;font-size:8.5px;color:#505050;line-height:9px">维护工艺处方</div>
<div class="a" style="left:833px;top:26px;width:33px;height:17.5px;background:#f5f5f5;border:1px solid #dcdcdc;border-radius:2px 0 0 2px;font-size:6.4px;color:#c0c0c0;text-align:center;line-height:15.5px;letter-spacing:2px;padding-left:2px">编辑</div>
<div class="a" style="left:865px;top:26px;width:32px;height:17.5px;background:#f5f5f5;border:1px solid #dcdcdc;border-radius:0 2px 2px 0;font-size:6.4px;color:#c0c0c0;text-align:center;line-height:15.5px;letter-spacing:2px;padding-left:2px">保存</div>
</div>

<div class="a" style="left:-3px;top:-3px;width:6px;height:6px;border-radius:50%;background:#fff;filter:blur(.8px)"></div>
<div class="a" style="left:-3.2px;top:520.5px;width:4.8px;height:7px;border-radius:50%;background:#fff;filter:blur(.7px)"></div>
<!-- SCROLLBAR -->
<div class="a" style="left:1017px;top:34.5px;width:7px;height:490px;background:#efefef"></div>
<div class="a" style="left:1017px;top:169.3px;width:7px;height:360px;background:linear-gradient(90deg,#cfc8cb,#c0b7bb 1.2px);border-radius:1px 1px 0 0"></div>

</div></body></html>
